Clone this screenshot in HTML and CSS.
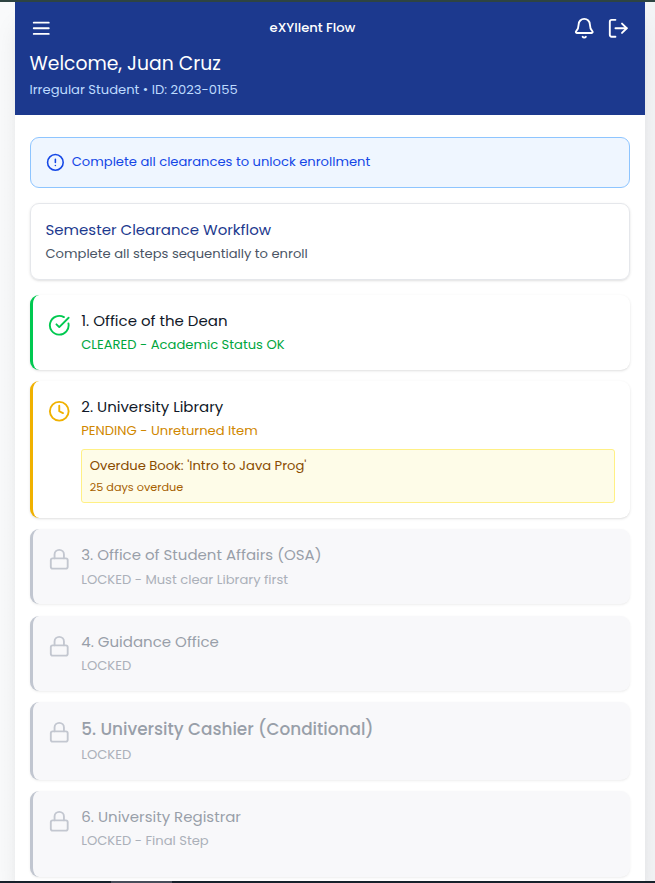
FILE: index.html
```html
<!DOCTYPE html>
<html lang="en">
<head>
  <meta charset="UTF-8">
  <meta name="viewport" content="width=device-width, initial-scale=1.0">
  <title>eXYllent Flow</title>

  <link rel="stylesheet" href="styles.css">
</head>
<body>
  <div class="top-strip"></div>

  <main>
    <header>
      <nav>
        <svg class="icon" viewBox="0 0 24 24"><path d="M4 6h16M4 12h16M4 18h16"/></svg>
        <span class="brand">eXYllent Flow</span>
        <div class="actions">
          <svg class="icon" viewBox="0 0 24 24"><path d="M10.268 21a2 2 0 0 0 3.464 0"/><path d="M3.262 15.326A1 1 0 0 0 4 17h16a1 1 0 0 0 .74-1.673C19.41 13.956 18 12.499 18 8A6 6 0 0 0 6 8c0 4.499-1.411 5.956-2.738 7.326"/></svg>
          <svg class="icon" viewBox="0 0 24 24"><path d="m16 17 5-5-5-5"/><path d="M21 12H9"/><path d="M9 21H5a2 2 0 0 1-2-2V5a2 2 0 0 1 2-2h4"/></svg>
        </div>
      </nav>
      <h1>Welcome, Juan Cruz</h1>
      <p class="student">Irregular Student • ID: 2023-0155</p>
    </header>

    <article>
      <div class="notice">
        <svg class="icon" viewBox="0 0 24 24"><circle cx="12" cy="12" r="10"/><path d="M12 8v4M12 16h.01"/></svg>
        <p>Complete all clearances to unlock enrollment</p>
      </div>

      <div class="intro">
        <h2>Semester Clearance Workflow</h2>
        <p>Complete all steps sequentially to enroll</p>
      </div>

      <section class="steps">
        <div class="step cleared">
          <svg class="icon" viewBox="0 0 24 24"><path d="M21.801 10A10 10 0 1 1 17 3.335"/><path d="m9 11 3 3L22 4"/></svg>
          <div class="step-body">
            <h3>1. Office of the Dean</h3>
            <p>CLEARED - Academic Status OK</p>
          </div>
        </div>

        <div class="step pending">
          <svg class="icon" viewBox="0 0 24 24"><circle cx="12" cy="12" r="10"/><path d="M12 6v6l4 2"/></svg>
          <div class="step-body">
            <h3>2. University Library</h3>
            <p>PENDING - Unreturned Item</p>
            <div class="overdue">
              <p>Overdue Book: 'Intro to Java Prog'</p>
              <small>25 days overdue</small>
            </div>
          </div>
        </div>

        <div class="step locked affairs">
          <svg class="icon" viewBox="0 0 24 24"><rect width="18" height="11" x="3" y="11" rx="2"/><path d="M7 11V7a5 5 0 0 1 10 0v4"/></svg>
          <div class="step-body">
            <h3>3. Office of Student Affairs (OSA)</h3>
            <p>LOCKED - Must clear Library first</p>
          </div>
        </div>

        <div class="step locked guidance">
          <svg class="icon" viewBox="0 0 24 24"><rect width="18" height="11" x="3" y="11" rx="2"/><path d="M7 11V7a5 5 0 0 1 10 0v4"/></svg>
          <div class="step-body">
            <h3>4. Guidance Office</h3>
            <p>LOCKED</p>
          </div>
        </div>

        <div class="step locked cashier">
          <svg class="icon" viewBox="0 0 24 24"><rect width="18" height="11" x="3" y="11" rx="2"/><path d="M7 11V7a5 5 0 0 1 10 0v4"/></svg>
          <div class="step-body">
            <h3>5. University Cashier (Conditional)</h3>
            <p>LOCKED</p>
          </div>
        </div>

        <div class="step locked registrar">
          <svg class="icon" viewBox="0 0 24 24"><rect width="18" height="11" x="3" y="11" rx="2"/><path d="M7 11V7a5 5 0 0 1 10 0v4"/></svg>
          <div class="step-body">
            <h3>6. University Registrar</h3>
            <p>LOCKED - Final Step</p>
          </div>
        </div>
      </section>
    </article>
  </main>

  <div class="bottom-strip"><span></span></div>
</body>
</html>
```

FILE: styles.css
```css
* {
  margin: 0;
  padding: 0;
  box-sizing: border-box;
}

body {
  height: 883px;
  overflow: hidden;
  display: flex;
  flex-direction: column;
  font: 13.125px 'Poppins', 'Inter', sans-serif;
  background: linear-gradient(to right, #f9fafb, #f3f4f6);
}

h1, h2, h3 {
  font-weight: 400;
}

.icon {
  display: block;
  flex: none;
  width: 22.5px;
  height: 22.5px;
  fill: none;
  stroke: currentColor;
  stroke-width: 2;
  stroke-linecap: round;
  stroke-linejoin: round;
}

.top-strip {
  height: 2px;
  background: #2e4442;
  position: relative;
}

.bottom-strip {
  height: 2px;
  padding-left: 111px;
  background: #17212b;
  position: relative;
}

.bottom-strip span {
  display: block;
  width: 61px;
  height: 2px;
  background: #474c59;
}

main {
  width: 630px;
  height: 879px;
  margin-left: 15px;
  background: #ffffff;
  box-shadow: 0 20px 25px -5px rgba(0, 0, 0, 0.1), 0 8px 10px -6px rgba(0, 0, 0, 0.1);
}

header {
  height: 113px;
  padding: 15px 15.75px 0 14.5px;
  background: #1c398e;
  color: #ffffff;
}

nav {
  height: 22.5px;
  display: flex;
  align-items: center;
  justify-content: space-between;
}

.brand {
  line-height: 20px;
  font-weight: 500;
}

.actions {
  display: flex;
  gap: 11.25px;
}

header h1 {
  margin-top: 11.5px;
  font-size: 18.75px;
  line-height: 26px;
}

.student {
  margin-top: 3px;
  line-height: 19px;
  color: #bedbff;
}

article {
  padding: 22px 15px 0;
}

.notice {
  height: 51px;
  padding: 14px 14.5px 0;
  display: flex;
  align-items: flex-start;
  gap: 7.5px;
  border: 1px solid #8ec5ff;
  border-radius: 9px;
  background: #eff6ff;
  color: #1447e6;
}

.notice .icon {
  width: 18.75px;
  height: 18.75px;
  margin-top: 1px;
}

.notice p {
  line-height: 19px;
}

.intro {
  height: 77px;
  margin-top: 15px;
  padding: 15px 14.5px;
  border: 1px solid #e5e7eb;
  border-radius: 9px;
  box-shadow: 0 1px 3px rgba(0, 0, 0, 0.1), 0 1px 2px -1px rgba(0, 0, 0, 0.1);
  color: #4a5565;
}

.intro h2 {
  font-size: 15px;
  line-height: 22px;
  color: #1c398e;
}

.intro p {
  margin-top: 3px;
  line-height: 20px;
}

.steps {
  margin-top: 15px;
  display: flex;
  flex-direction: column;
  gap: 11px;
}

.step {
  height: 75px;
  padding: 15px 15px 0;
  display: flex;
  gap: 10.75px;
  border-left: 3px solid;
  border-radius: 9px;
  background: #ffffff;
  box-shadow: 0 1px 3px rgba(0, 0, 0, 0.1), 0 1px 2px -1px rgba(0, 0, 0, 0.1);
}

.step .icon {
  margin-top: 4px;
}

.step-body {
  flex: 1;
}

.step h3 {
  font-size: 15px;
  line-height: 22px;
  color: #101828;
}

.step-body > p {
  margin-top: 3px;
  line-height: 20px;
}

.cleared {
  border-color: #00c950;
}

.cleared .icon {
  color: #00c950;
}

.cleared p {
  color: #00a63e;
}

.pending {
  height: 137px;
  border-color: #f0b100;
}

.pending .icon {
  color: #f0b100;
}

.pending .step-body > p {
  color: #d08700;
}

.overdue {
  height: 54px;
  margin-top: 8px;
  padding: 6px 7.5px 0;
  border: 1px solid #fff085;
  border-radius: 3px;
  background: #fefce8;
}

.overdue p {
  line-height: 20px;
  color: #894b00;
}

.overdue small {
  display: block;
  margin-top: 4px;
  font-size: 11.25px;
  line-height: 15px;
  color: #a65f00;
}

.locked {
  border-color: #c1c6d0;
  background: #f8f8fa;
  box-shadow: 0 1px 3px rgba(0, 0, 0, 0.06), 0 1px 2px -1px rgba(0, 0, 0, 0.06);
}

.locked .icon {
  color: #c3c7d0;
}

.locked h3 {
  color: #989fa9;
}

.locked p {
  color: #abb0b9;
}

.affairs .step-body > p {
  margin-top: 4px;
}

.guidance {
  margin-top: 1px;
}

.guidance .icon {
  margin-top: 3.5px;
}

.cashier {
  height: 78px;
}

.cashier h3 {
  font-size: 16.875px;
  line-height: 25px;
  font-weight: 500;
}

.registrar {
  height: 86px;
}
```
